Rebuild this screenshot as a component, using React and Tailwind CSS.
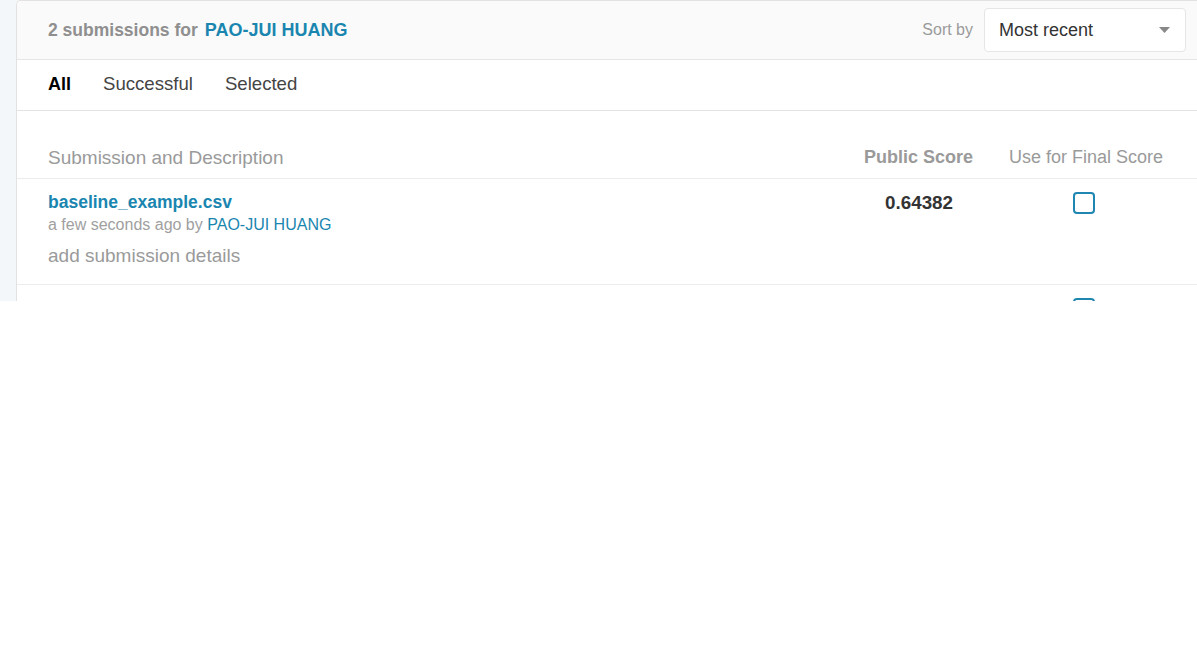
const font = { fontFamily: '"Liberation Sans", Arial, sans-serif' };

const rows = [
  { file: 'baseline_example.csv', when: 'a few seconds ago', user: 'PAO-JUI HUANG', score: '0.64382' },
  { file: 'baseline_example.csv', when: 'a few minutes ago', user: 'PAO-JUI HUANG', score: '0.61087' },
];

function Checkbox() {
  return <div className="w-[22px] h-[22px] rounded-[4px] border-2 border-[#1f86b2] bg-white" />;
}

export default function App() {
  return (
    <div className="w-[1197px] h-[648px] bg-white" style={font}>
      <div className="h-[301px] overflow-hidden flex bg-[#f4f7f9]">
        <div className="w-4 shrink-0" />
        <div className="flex-1 min-w-0 bg-white border-l border-t border-[#e2e2e2] rounded-tl-[5px]">
          {/* header */}
          <div className="h-[59px] flex items-center justify-between pl-[31px] pr-[11px] bg-[#fafafa] border-b border-[#e6e6e6] rounded-tl-[5px]">
            <div className="flex items-center gap-[7px] text-[17.5px] font-bold">
              <span className="text-[#8f8f8f]">2 submissions for</span>
              <span className="text-[18px] text-[#1a86b0]">PAO-JUI HUANG</span>
            </div>
            <div className="flex items-center gap-[11px]">
              <span className="text-[16px] text-[#9a9a9a]">Sort by</span>
              <div className="w-[202px] h-[44px] flex items-center justify-between pl-[14px] pr-[15px] bg-white border border-[#e6e6e6] rounded-[4px]">
                <span className="text-[18px] text-[#333]">Most recent</span>
                <svg width="11" height="6" viewBox="0 0 11 6">
                  <path d="M0 0h11L5.5 6z" fill="#888" />
                </svg>
              </div>
            </div>
          </div>

          {/* tabs */}
          <div className="h-[51px] flex items-center gap-[32px] pl-[31px] pb-[2px] border-b border-[#e3e3e3] text-[18.6px]">
            <span className="font-bold text-black text-[18px]">All</span>
            <span className="text-[#444]">Successful</span>
            <span className="text-[#444]">Selected</span>
          </div>

          {/* table header */}
          <div className="flex items-end pl-[31px] pt-[36px] pb-[10px] border-b border-[#ececec] text-[18px] leading-[21px]">
            <div className="flex-1 text-[19px] text-[#9a9a9a]">Submission and Description</div>
            <div className="w-[140px] text-right font-bold text-[#9a9a9a]">Public Score</div>
            <div className="w-[224px] pl-[2px] text-center text-[#9a9a9a]">Use for Final Score</div>
          </div>

          {rows.map((r, i) => (
            <div key={i} className="flex pl-[31px] pt-[13px] pb-[18px] border-b border-[#ececec]">
              <div className="flex-1 flex flex-col">
                <span className="text-[17.5px] leading-[21px] font-bold text-[#1a86b0]">{r.file}</span>
                <span className="text-[16px] leading-[18px] mt-[3px] text-[#a0a0a0]">
                  {r.when} by <span className="text-[#1a86b0]">{r.user}</span>
                </span>
                <span className="text-[19px] leading-[21px] mt-[11px] text-[#9a9a9a]">add submission details</span>
              </div>
              <div className="w-[140px] pr-[20px] text-right text-[18.8px] leading-[21px] font-bold text-[#333]">{r.score}</div>
              <div className="w-[224px] pr-[3px] flex justify-center">
                <Checkbox />
              </div>
            </div>
          ))}
        </div>
      </div>
    </div>
  );
}
